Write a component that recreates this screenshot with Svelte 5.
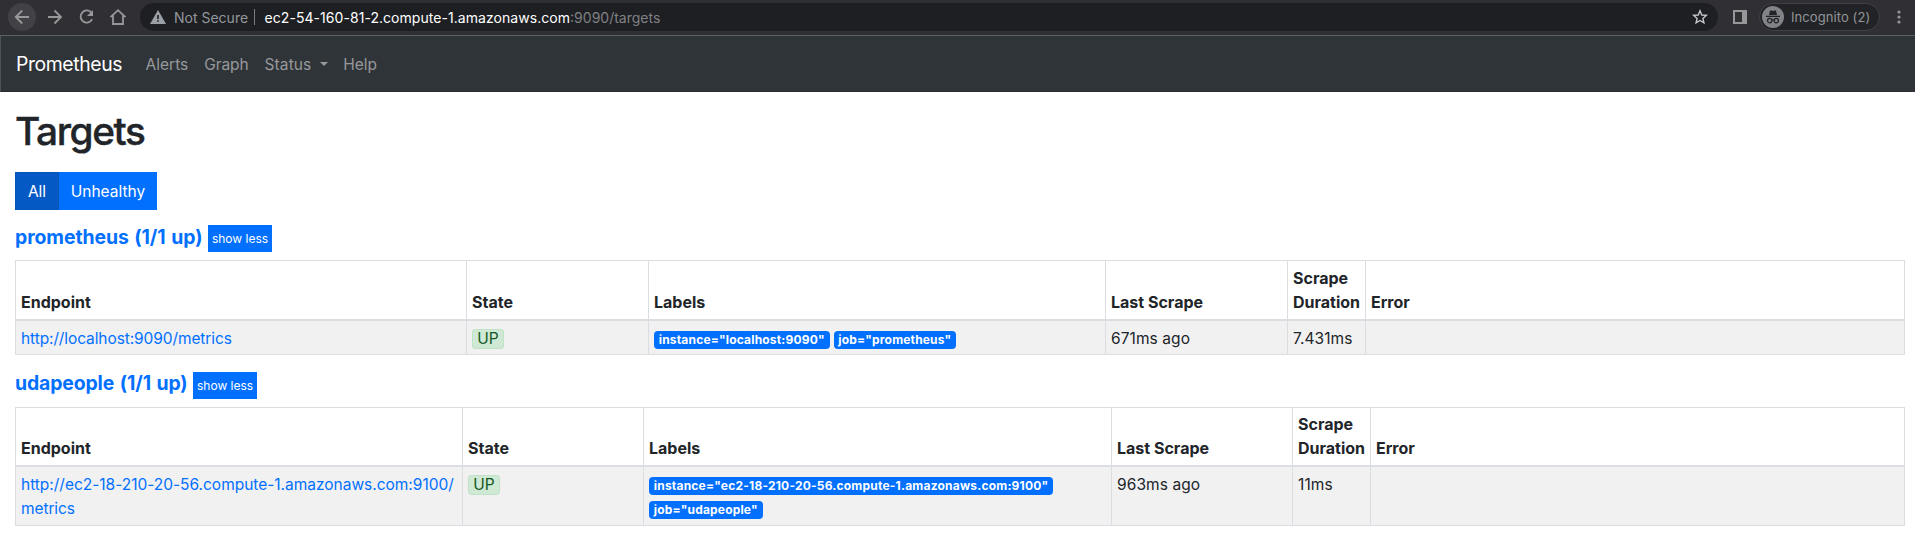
<script>
  const pools = [
    {
      name: 'prometheus (1/1 up)', cls: 'first', cols: [451, 182, 457, 182, 78, 539],
      url: ['http://localhost:9090/metrics'],
      labels: ['instance="localhost:9090"', 'job="prometheus"'],
      last: '671ms ago', duration: '7.431ms'
    },
    {
      name: 'udapeople (1/1 up)', cls: 'second', cols: [447, 181, 468, 181, 78, 534],
      url: ['http://ec2-18-210-20-56.compute-1.amazonaws.com:9100/', 'metrics'],
      labels: ['instance="ec2-18-210-20-56.compute-1.amazonaws.com:9100"', 'job="udapeople"'],
      last: '963ms ago', duration: '11ms'
    }
  ];
</script>

<header class="toolbar">
  <span class="back"><svg width="28" height="28" viewBox="0 0 28 28"><path d="M21 14H8M14.2 7.5 7.7 14l6.5 6.5" /></svg></span>
  <svg class="nav" width="16" height="28" viewBox="0 0 16 28"><path d="M1 14h13M7.5 7.5 14 14l-6.5 6.5" /></svg>
  <svg class="nav" width="16" height="28" viewBox="0 0 16 28"><path d="M12.6 9.9A6.1 6.1 0 1 0 13.2 16.2" /><path class="solid" d="M14 7v6H8z" /></svg>
  <svg class="nav" width="18" height="28" viewBox="0 0 18 28"><path d="M1.5 14.2 9 7.2l7.5 7M4 12.5V21h10v-8.5" /></svg>
  <div class="address">
    <svg width="16" height="14" viewBox="0 0 16 14"><path d="M8 0 16 14H0Z" fill="#9aa0a6" /><path d="M7.2 5h1.6v4H7.2zM7.2 10.2h1.6v1.6H7.2z" fill="#1e1f23" /></svg>
    <span class="notsec">Not Secure</span><i class="sep"></i><span class="host">ec2-54-160-81-2.compute-1.amazonaws.com</span><span class="path">:9090/targets</span>
    <svg class="star" width="16" height="16" viewBox="0 0 16 16"><path d="m8 1.8 1.8 4.2 4.5.4-3.4 3 1 4.4L8 11.5l-3.9 2.3 1-4.4-3.4-3 4.5-.4Z" /></svg>
  </div>
  <svg class="panel" width="14" height="14" viewBox="0 0 14 14"><path fill-rule="evenodd" d="M0 0h14v14H0zM2 2v10h7V2z" fill="#97979a" /></svg>
  <div class="incog">
    <svg width="22" height="22" viewBox="0 0 22 22"><circle cx="11" cy="11" r="11" fill="#828386" /><path d="M7 9 8 4.5h1.5L11 5l1.5-.5H14L15 9zM4 9.8h14v1.2H4z" fill="#222326" /><g fill="none" stroke="#222326" stroke-width="1.2"><circle cx="7.7" cy="14.6" r="2.2" /><circle cx="14.3" cy="14.6" r="2.2" /><path d="M9.9 14.3q1.1-.7 2.2 0" /></g></svg>
    <span class="inc">Incognito (2)</span>
  </div>
  <svg class="dots" width="4" height="14" viewBox="0 0 4 14" fill="#97979a"><circle cx="2" cy="2" r="1.6" /><circle cx="2" cy="7" r="1.6" /><circle cx="2" cy="12" r="1.6" /></svg>
</header>

<nav class="navbar">
  <span class="brand">Prometheus</span>
  <span class="link">Alerts</span>
  <span class="link graph">Graph</span>
  <span class="link status">Status</span><i class="caret"></i>
  <span class="link help">Help</span>
</nav>

<main>
  <h1>Targets</h1>
  <div class="group"><button class="active">All</button><button>Unhealthy</button></div>
  {#each pools as pool}
    <section class={pool.cls}>
      <h3><span>{pool.name}</span><button class="less">show less</button></h3>
      <table>
        <colgroup>{#each pool.cols as w}<col style="width:{w}px" />{/each}</colgroup>
        <thead>
          <tr><th>Endpoint</th><th>State</th><th>Labels</th><th>Last Scrape</th><th>Scrape<br />Duration</th><th>Error</th></tr>
        </thead>
        <tbody>
          <tr>
            <td class="url">{#each pool.url as line}<div>{line}</div>{/each}</td>
            <td><span class="up">UP</span></td>
            <td><div class="labels">{#each pool.labels as l}<span class="badge">{l}</span>{/each}</div></td>
            <td>{pool.last}</td>
            <td>{pool.duration}</td>
            <td></td>
          </tr>
        </tbody>
      </table>
    </section>
  {/each}
</main>

<style>
  :global(body) { margin: 0; background: #fff; font-family: Inter, "Liberation Sans", sans-serif; color: #212529; }
  * { box-sizing: border-box; }
  .toolbar { height: 36px; background: #303034; border-bottom: 1px solid #5b5f62; display: flex; align-items: flex-start; padding: 3px 0 0 8px; }
  .toolbar svg { display: block; flex: none; }
  .back { width: 28px; height: 28px; border-radius: 50%; background: #424146; }
  .back path, .nav path { fill: none; stroke: #98989b; stroke-width: 1.8; }
  .nav .solid { fill: #98989b; stroke: none; }
  .nav { margin-left: 11px; }
  .nav + .nav { margin-left: 16px; }
  .nav:nth-of-type(3) { margin-left: 14px; }
  .address { flex: none; width: 1578px; height: 28px; margin-left: 13px; border-radius: 14px; background: #1e1f23; display: flex; align-items: center; font-size: 14px; padding: 0 10px; white-space: nowrap; }
  .notsec { margin-left: 8px; color: #92979c; }
  .sep { width: 1px; height: 16px; margin: 0 9.5px 0 6px; background: #797b7e; }
  .host { color: #fff; letter-spacing: .05px; }
  .path { color: #808184; }
  .star { margin-left: auto; }
  .star path { fill: none; stroke: #c7c8ca; stroke-width: 1.4; }
  .toolbar .panel { margin: 7px 12px 0 15px; }
  .incog { width: 121px; height: 28px; border: 1px solid #414145; border-radius: 14px; background: #222326; display: flex; align-items: center; padding-left: 2px; color: #939598; font-size: 13px; letter-spacing: .08px; white-space: nowrap; }
  .inc { margin-left: 7px; }
  .dots { margin: 7px 0 0 17px; }
  .navbar { height: 56px; background: #2f3438; border-left: 1px solid #505458; border-bottom: 1px solid #2b2d32; display: flex; align-items: center; padding: 1px 0 0 15px; color: #97999b; font-size: 15.5px; }
  .brand { color: #fff; font-size: 19.4px; letter-spacing: -.4px; width: 105.6px; margin-right: 8px; }
  .link { margin-left: 16px; }
  .graph { letter-spacing: -.1px; }
  .status { letter-spacing: .1px; }
  .caret { border: 4px solid transparent; border-top-color: currentColor; border-bottom: 0; margin-left: 8.5px; }
  .help { margin-left: 15.3px; }
  main { padding: 16px 10px 0 15px; }
  h1 { margin: 0; font-size: 38.8px; line-height: 46px; font-weight: 500; letter-spacing: -1.4px; -webkit-text-stroke: .4px currentColor; }
  .group { display: flex; margin-top: 18px; }
  button { border: 0; background: #0270ff; color: #fff; font: 15.5px Inter, sans-serif; height: 38px; width: 98px; padding: 0; }
  .group .active { width: 44px; background: #0459c4; border: 1px solid #0355b7; }
  h3 { margin: 15px 0 8px; height: 27px; display: flex; font-size: 19.4px; font-weight: 700; color: #0270ff; line-height: 24px; letter-spacing: -.08px; }
  h3 span { word-spacing: 1.15px; }
  .second h3 { margin-top: 17px; letter-spacing: -.12px; line-height: 23px; }
  .less { width: 64px; height: 27px; font-size: 12px; margin-left: 5.6px; letter-spacing: 0; }
  .second .less { padding-bottom: 1px; }
  table { table-layout: fixed; border-collapse: collapse; width: 1890px; font-size: 15.5px; letter-spacing: .08px; line-height: 24px; }
  th, td { border: 1px solid #dadee2; text-align: left; vertical-align: top; }
  th { padding: 3px 5px 5px; vertical-align: bottom; border-bottom-width: 2px; font-size: 16px; letter-spacing: 0; }
  td { background: #f1f1f2; padding: 6.5px 5px 1px; }
  .first thead tr { height: 59px; }
  .first tbody tr { height: 35px; }
  .second thead tr { height: 58px; }
  .second tbody tr { height: 60px; }
  .url { color: #0270ff; white-space: nowrap; letter-spacing: -.1px; }
  .second .url div:first-child { letter-spacing: -.02px; }
  .up { display: inline-block; height: 20px; width: 32px; line-height: 18px; border: 1px solid #c0e3c8; border-radius: 3px; background: #cfe9d4; color: #155724; text-align: center; }
  .labels { display: flex; flex-wrap: wrap; gap: 6px 4px; padding-top: 4px; }
  .badge { height: 18px; line-height: 18px; font-size: 12px; letter-spacing: .17px; font-weight: 700; border-radius: 4px; background: #0270ff; color: #fff; padding: 0 4.8px; white-space: nowrap; }
  .second .badge:first-child { letter-spacing: .2px; }
</style>
